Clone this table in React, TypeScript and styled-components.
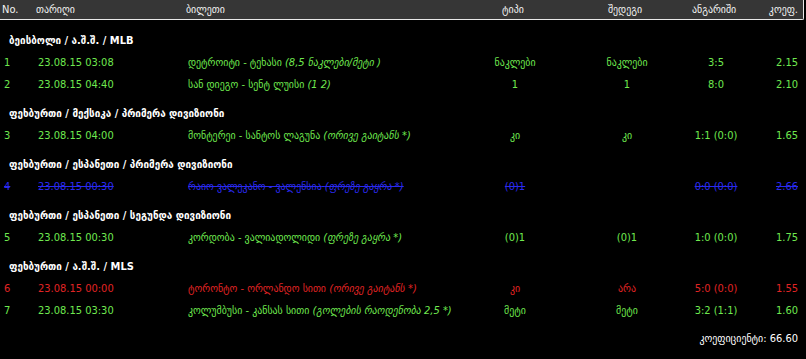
import React from 'react'
import styled, { createGlobalStyle } from 'styled-components'

type Status = 'won' | 'lost' | 'void'
type Align = 'left' | 'center' | 'right'

interface Bet {
  no: number
  date: string
  match: string
  note: string
  type: string
  result: string
  score: string
  odds: string
  status: Status
}

interface Section {
  title: string
  bets: Bet[]
}

const sections: Section[] = [
  {
    title: 'ბეისბოლი / ა.შ.შ. / MLB',
    bets: [
      { no: 1, date: '23.08.15 03:08', match: 'დეტროიტი - ტეხასი', note: '(8,5 ნაკლები/მეტი )', type: 'ნაკლები', result: 'ნაკლები', score: '3:5', odds: '2.15', status: 'won' },
      { no: 2, date: '23.08.15 04:40', match: 'სან დიეგო - სენტ ლუისი', note: '(1 2)', type: '1', result: '1', score: '8:0', odds: '2.10', status: 'won' },
    ],
  },
  {
    title: 'ფეხბურთი / მექსიკა / პრიმერა დივიზიონი',
    bets: [
      { no: 3, date: '23.08.15 04:00', match: 'მონტერეი - სანტოს ლაგუნა', note: '(ორივე გაიტანს *)', type: 'კი', result: 'კი', score: '1:1 (0:0)', odds: '1.65', status: 'won' },
    ],
  },
  {
    title: 'ფეხბურთი / ესპანეთი / პრიმერა დივიზიონი',
    bets: [
      { no: 4, date: '23.08.15 00:30', match: 'რაიო ვალეკანო - ვალენსია', note: '(ფრეზე გაყრა *)', type: '(0)1', result: '', score: '0:0 (0:0)', odds: '2.66', status: 'void' },
    ],
  },
  {
    title: 'ფეხბურთი / ესპანეთი / სეგუნდა დივიზიონი',
    bets: [
      { no: 5, date: '23.08.15 00:30', match: 'კორდობა - ვალიადოლიდი', note: '(ფრეზე გაყრა *)', type: '(0)1', result: '(0)1', score: '1:0 (0:0)', odds: '1.75', status: 'won' },
    ],
  },
  {
    title: 'ფეხბურთი / ა.შ.შ. / MLS',
    bets: [
      { no: 6, date: '23.08.15 00:00', match: 'ტორონტო - ორლანდო სითი', note: '(ორივე გაიტანს *)', type: 'კი', result: 'არა', score: '5:0 (0:0)', odds: '1.55', status: 'lost' },
      { no: 7, date: '23.08.15 03:30', match: 'კოლუმბუსი - კანსას სითი', note: '(გოლების რაოდენობა 2,5 *)', type: 'მეტი', result: 'მეტი', score: '3:2 (1:1)', odds: '1.60', status: 'won' },
    ],
  },
]

const statusColor: Record<Status, string> = {
  won: '#6fe84f',
  lost: '#e02424',
  void: '#2a2af0',
}

const GlobalStyle = createGlobalStyle`
  html, body {
    margin: 0;
    padding: 0;
    background: #000;
  }
  body {
    font-family: "Liberation Sans Narrow", "DejaVu Sans Condensed", "Liberation Sans", sans-serif;
    font-size: 11px;
  }
`

const Page = styled.div`
  width: 806px;
  height: 359px;
  background: #000;
  overflow: hidden;
`

const columns = '34px 150px 282px 90px 134px 44px 1fr'

const HeaderBar = styled.div`
  display: grid;
  grid-template-columns: ${columns};
  align-items: center;
  height: 19px;
  padding: 0 5px 0 2px;
  margin-right: 2px;
  background: #363636;
  border-bottom: 1px solid #e8e8e8;
  border-right: 1px solid #e8e8e8;
  border-bottom-right-radius: 2px;
  color: #f2f2f2;
`

const HeadCell = styled.div<{ $align?: Align }>`
  text-align: ${({ $align }) => $align || 'left'};
  white-space: nowrap;
`

const Body = styled.div`
  padding-top: 2px;
`

const SectionTitle = styled.div`
  height: 20px;
  line-height: 20px;
  margin-top: 9px;
  padding-left: 9px;
  color: #fff;
  font-weight: bold;
`

const Row = styled.div<{ $status: Status }>`
  display: grid;
  grid-template-columns: ${columns};
  align-items: center;
  height: 22px;
  padding: 0 8px 0 4px;
  color: ${({ $status }) => statusColor[$status]};
  text-decoration: ${({ $status }) => ($status === 'void' ? 'line-through' : 'none')};
`

const Cell = styled.div<{ $align?: Align }>`
  text-align: ${({ $align }) => $align || 'left'};
  white-space: nowrap;
`

const Note = styled.i`
  font-style: italic;
`

const Footer = styled.div`
  margin-top: 11px;
  padding-right: 8px;
  text-align: right;
  color: #fff;
`

export default function App() {
  return (
    <Page>
      <GlobalStyle />
      <HeaderBar>
        <HeadCell>No.</HeadCell>
        <HeadCell>თარიღი</HeadCell>
        <HeadCell>ბილეთი</HeadCell>
        <HeadCell $align="center">ტიპი</HeadCell>
        <HeadCell $align="center">შედეგი</HeadCell>
        <HeadCell $align="center">ანგარიში</HeadCell>
        <HeadCell $align="right">კოეფ.</HeadCell>
      </HeaderBar>
      <Body>
        {sections.map((s) => (
          <React.Fragment key={s.title + s.bets[0].no}>
            <SectionTitle>{s.title}</SectionTitle>
            {s.bets.map((b) => (
              <Row key={b.no} $status={b.status}>
                <Cell>{b.no}</Cell>
                <Cell>{b.date}</Cell>
                <Cell>
                  {b.match} <Note>{b.note}</Note>
                </Cell>
                <Cell $align="center">{b.type}</Cell>
                <Cell $align="center">{b.result}</Cell>
                <Cell $align="center">{b.score}</Cell>
                <Cell $align="right">{b.odds}</Cell>
              </Row>
            ))}
          </React.Fragment>
        ))}
        <Footer>კოეფიციენტი: 66.60</Footer>
      </Body>
    </Page>
  )
}
